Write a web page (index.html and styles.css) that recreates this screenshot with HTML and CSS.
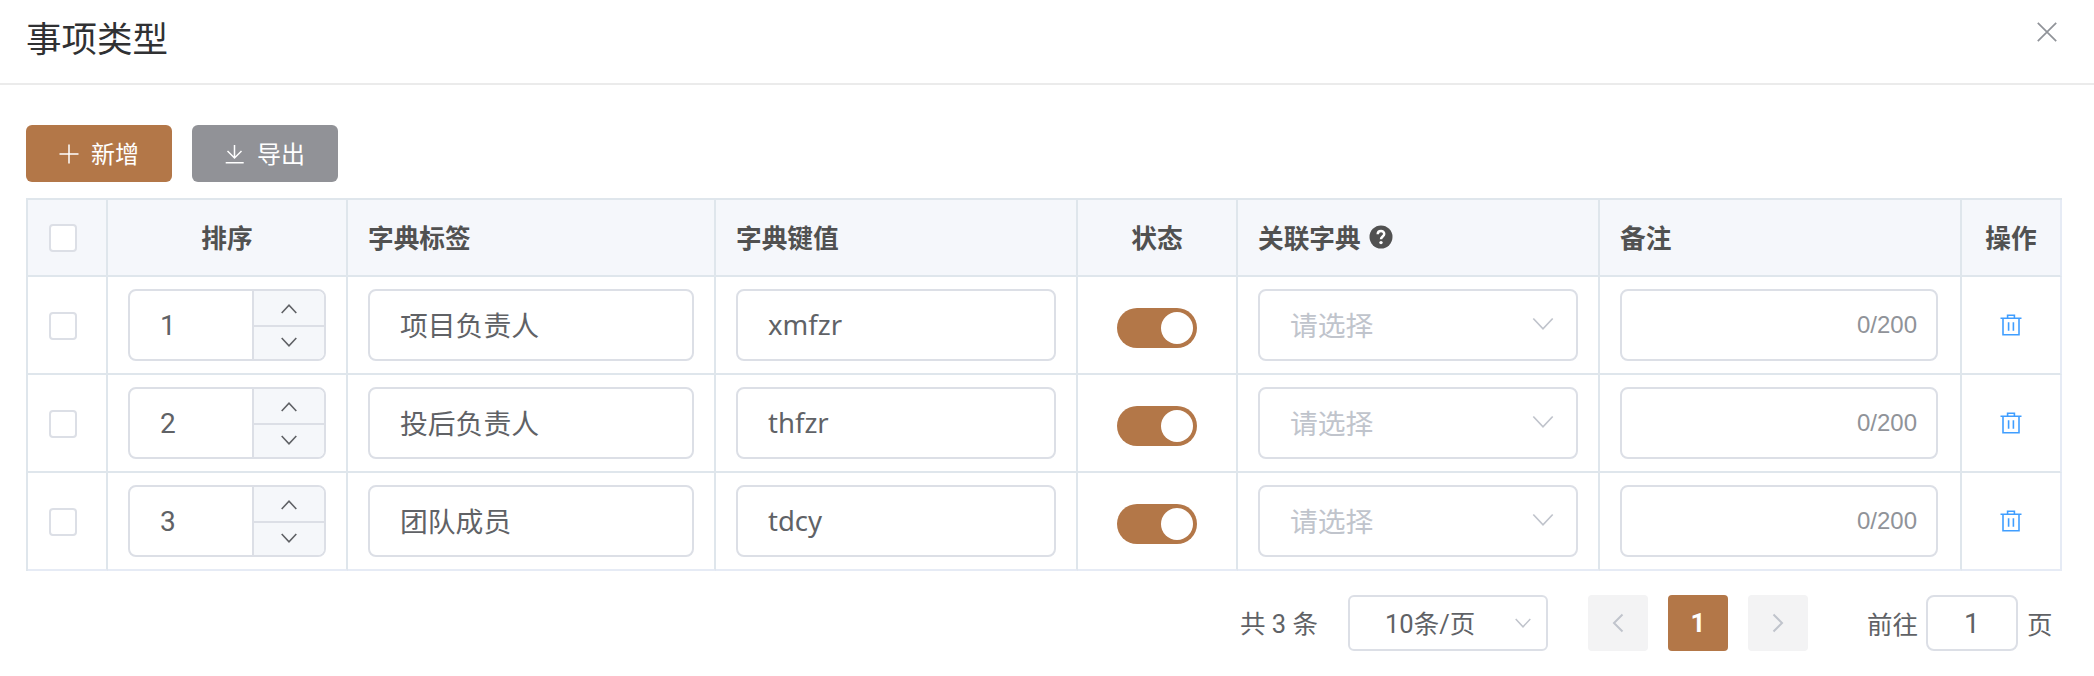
FILE: index.html
```html
<!DOCTYPE html>
<html lang="zh-CN">
<head>
<meta charset="utf-8">
<title>事项类型</title>
<link rel="stylesheet" href="styles.css">
</head>
<body>
<svg class="defs" width="0" height="0">
  <symbol id="up" viewBox="0 0 16 10"><path d="M.7 9 8 1.2 15.3 9"/></symbol>
  <symbol id="down" viewBox="0 0 16 10"><path d="M.7 1 8 8.8 15.3 1"/></symbol>
  <symbol id="down-lg" viewBox="0 0 22 14"><path d="M1.3 1.5 11 11.8 20.7 1.5"/></symbol>
  <symbol id="trash" viewBox="0 0 22 22"><path d="M.5 4.3h21M7.6 4V1.2h6.8V4M3 4.5v16.3h16V4.5M8.6 8.3v8.4M13.4 8.3v8.4"/></symbol>
</svg>
<header class="head">
  <h1 class="title">事项类型</h1>
  <svg class="close" viewBox="0 0 20 20"><path d="M.8.8l18.4 18.4M19.2.8.8 19.2"/></svg>
</header>
<main class="body">
  <div class="toolbar">
    <button class="btn primary"><svg class="btn-icon" viewBox="0 0 20 20"><path d="M10 .5v19M.5 10h19"/></svg><span class="btn-text">新增</span></button>
    <button class="btn info"><svg class="btn-icon" viewBox="0 0 20 20"><path d="M9.5 1v13M2.5 7l7 7 7-7M.7 18.8h18"/></svg><span class="btn-text">导出</span></button>
  </div>
  <div class="table">
    <div class="row thead">
      <div class="cell check"><i class="box"></i></div>
      <div class="cell center">排序</div>
      <div class="cell">字典标签</div>
      <div class="cell">字典键值</div>
      <div class="cell center">状态</div>
      <div class="cell">关联字典<svg class="help" viewBox="0 0 24 24"><circle cx="12" cy="12" r="11.5"/><path d="M8.7 9.3C8.8 5 15.3 5.2 15.2 9c0 2.500-3.200 2.500-3.200 5.300"/><circle class="dot" cx="12" cy="17.600" r="1.700"/></svg></div>
      <div class="cell">备注</div>
      <div class="cell center">操作</div>
    </div>
    <div class="row">
      <div class="cell check"><i class="box"></i></div>
      <div class="cell"><div class="field number"><span class="value">1</span><div class="steps"><span class="step up"><svg><use href="#up"/></svg></span><span class="step down"><svg><use href="#down"/></svg></span></div></div></div>
      <div class="cell"><div class="field">项目负责人</div></div>
      <div class="cell"><div class="field latin">xmfzr</div></div>
      <div class="cell center"><span class="switch"></span></div>
      <div class="cell"><div class="field select">请选择<svg class="arrow"><use href="#down-lg"/></svg></div></div>
      <div class="cell remark"><div class="field count">0/200</div></div>
      <div class="cell center"><svg class="trash"><use href="#trash"/></svg></div>
    </div>
    <div class="row">
      <div class="cell check"><i class="box"></i></div>
      <div class="cell"><div class="field number"><span class="value">2</span><div class="steps"><span class="step up"><svg><use href="#up"/></svg></span><span class="step down"><svg><use href="#down"/></svg></span></div></div></div>
      <div class="cell"><div class="field">投后负责人</div></div>
      <div class="cell"><div class="field latin">thfzr</div></div>
      <div class="cell center"><span class="switch"></span></div>
      <div class="cell"><div class="field select">请选择<svg class="arrow"><use href="#down-lg"/></svg></div></div>
      <div class="cell remark"><div class="field count">0/200</div></div>
      <div class="cell center"><svg class="trash"><use href="#trash"/></svg></div>
    </div>
    <div class="row">
      <div class="cell check"><i class="box"></i></div>
      <div class="cell"><div class="field number"><span class="value">3</span><div class="steps"><span class="step up"><svg><use href="#up"/></svg></span><span class="step down"><svg><use href="#down"/></svg></span></div></div></div>
      <div class="cell"><div class="field">团队成员</div></div>
      <div class="cell"><div class="field latin">tdcy</div></div>
      <div class="cell center"><span class="switch"></span></div>
      <div class="cell"><div class="field select">请选择<svg class="arrow"><use href="#down-lg"/></svg></div></div>
      <div class="cell remark"><div class="field count">0/200</div></div>
      <div class="cell center"><svg class="trash"><use href="#trash"/></svg></div>
    </div>
  </div>
  <nav class="pager">
    <span class="total">共 3 条</span>
    <div class="size"><span class="size-text">10条/页</span><svg class="size-arrow"><use href="#down"/></svg></div>
    <button class="page"><svg viewBox="0 0 12 20"><path d="M10.500 1.500 2 10l8.500 8.500"/></svg></button>
    <button class="page active">1</button>
    <button class="page"><svg viewBox="0 0 12 20"><path d="M1.500 1.500 10 10l-8.500 8.500"/></svg></button>
    <span class="goto">前往</span>
    <div class="jump">1</div>
    <span class="unit">页</span>
  </nav>
</main>
</body>
</html>
```
FILE: styles.css
```css
* { box-sizing: border-box; }
body {
  margin: 0;
  background: #fff;
  color: #606266;
  font-family: Roboto, "Noto Sans CJK SC", sans-serif;
}
svg { fill: none; stroke: currentColor; flex: none; }
.defs { display: none; }

.head {
  display: flex;
  justify-content: space-between;
  height: 85px;
  padding: 0 37px 0 26px;
  border-bottom: 2px solid #ebebeb;
}
.title {
  margin: 0;
  color: #303133;
  font: 400 35.5px/78px "Liberation Sans", "Noto Sans CJK SC", sans-serif;
  padding-top: 1px;
}
.close { width: 20px; height: 20px; margin-top: 22px; color: #909399; stroke-width: 1.7; }

.body { padding: 40px 32px 0 26px; }
.toolbar { display: flex; gap: 20px; margin-bottom: 16px; }
.btn {
  display: flex;
  align-items: center;
  gap: 12px;
  width: 146px;
  height: 57px;
  padding: 0 0 0 33px;
  border: 0;
  border-radius: 6px;
  color: #fff;
  font: 24px "Noto Sans CJK SC", sans-serif;
}
.btn-text { padding-bottom: 3px; }
.primary { background: #b37748; }
.info { background: #919297; }
.btn-icon { width: 20px; height: 20px; stroke-width: 1.5; }

.table { border: 2px solid #dfe6ec; border-width: 2px 0 0 2px; }
.row {
  display: grid;
  grid-template-columns: 80px 240px 368px 362px 160px 362px 362px 100px;
  height: 98px;
}
.cell {
  display: flex;
  align-items: center;
  padding: 0 20px;
  border-right: 2px solid #dfe6ec;
  border-bottom: 2px solid #dfe6ec;
}
.cell:last-child { border-right-color: #e6ebf5; }
.row:last-child .cell { border-bottom-color: #e6ebf5; }
.thead { height: 77px; color: #515151; font-size: 25.700px; font-weight: 700; }
.thead .cell { padding-bottom: 2px; background: #f5f7fb; }
.cell.center { justify-content: center; }
.cell.check { padding: 2px 0 0 21px; }
.cell.remark { padding-right: 22px; }
.thead .cell.check { padding: 1px 0 0 21px; }
.box { width: 28px; height: 28px; border: 2px solid #dcdfe6; border-radius: 4px; background: #fff; }
.help { width: 24px; height: 24px; margin: 1px 0 0 8px; fill: #515151; stroke: none; }
.help path { fill: none; stroke: #fff; stroke-width: 2.5; }
.help .dot { fill: #fff; }

.field {
  display: flex;
  align-items: center;
  width: 100%;
  height: 72px;
  padding: 0 30px 2px;
  border: 2px solid #dcdfe6;
  border-radius: 8px;
  font-size: 27.800px;
}
.latin { font-family: "Noto Sans", sans-serif; font-size: 27.500px; }
.number { padding: 0; overflow: hidden; font-size: 28px; }
.value { flex: 1; padding-left: 30px; }
.steps { width: 72px; height: 68px; border-left: 2px solid #dcdfe6; background: #f5f7fa; }
.step { display: flex; justify-content: center; height: 34px; }
.step svg { width: 16px; height: 10px; stroke-width: 1.6; }
.step.up { height: 36px; padding-top: 13px; border-bottom: 2px solid #dcdfe6; }
.step.down { height: 32px; padding-top: 10px; }
.select { justify-content: space-between; padding-right: 22px; color: #c0c4cc; }
.arrow { width: 22px; height: 14px; stroke-width: 1.7; }
.count { justify-content: flex-end; padding: 0 19px 0 0; color: #909399; font: 24px "Liberation Sans", sans-serif; }
.switch {
  display: flex;
  justify-content: flex-end;
  width: 80px;
  height: 40px;
  margin-top: 6px;
  padding: 4px;
  border-radius: 20px;
  background: #b37748;
}
.switch::after { content: ""; width: 32px; height: 32px; border-radius: 50%; background: #fff; }
.trash { width: 22px; height: 22px; margin-right: 1px; color: #409eff; stroke-width: 1.6; }

.pager {
  display: flex;
  align-items: center;
  justify-content: flex-end;
  height: 56px;
  margin-top: 24px;
  padding-right: 9.500px;
  font-size: 25.500px;
}
.total { margin-right: 30px; padding-bottom: 4px; }
.goto, .unit { padding-bottom: 2px; }
.size-text { padding-bottom: 4px; }
.size {
  display: flex;
  align-items: center;
  justify-content: space-between;
  width: 200px;
  height: 56px;
  margin-right: 40px;
  padding: 0 15px 0 35px;
  border: 2px solid #dcdfe6;
  border-radius: 6px;
}
.size-arrow { width: 16px; height: 10px; color: #c0c4cc; stroke-width: 1.5; }
.page {
  display: flex;
  align-items: center;
  justify-content: center;
  width: 60px;
  height: 56px;
  margin-right: 20px;
  padding: 0;
  border: 0;
  border-radius: 4px;
  background: #f3f3f4;
  color: #c0c4cc;
  font: 700 26px Roboto, sans-serif;
}
.page svg { width: 12px; height: 20px; stroke-width: 2; }
.page.active { background: #b37748; color: #fff; }
.goto { margin-left: 39px; }
.jump {
  display: flex;
  align-items: center;
  justify-content: center;
  width: 92px;
  height: 56px;
  margin: 0 9px 0 8px;
  border: 2px solid #dcdfe6;
  border-radius: 8px;
  font-size: 28px;
}
```
